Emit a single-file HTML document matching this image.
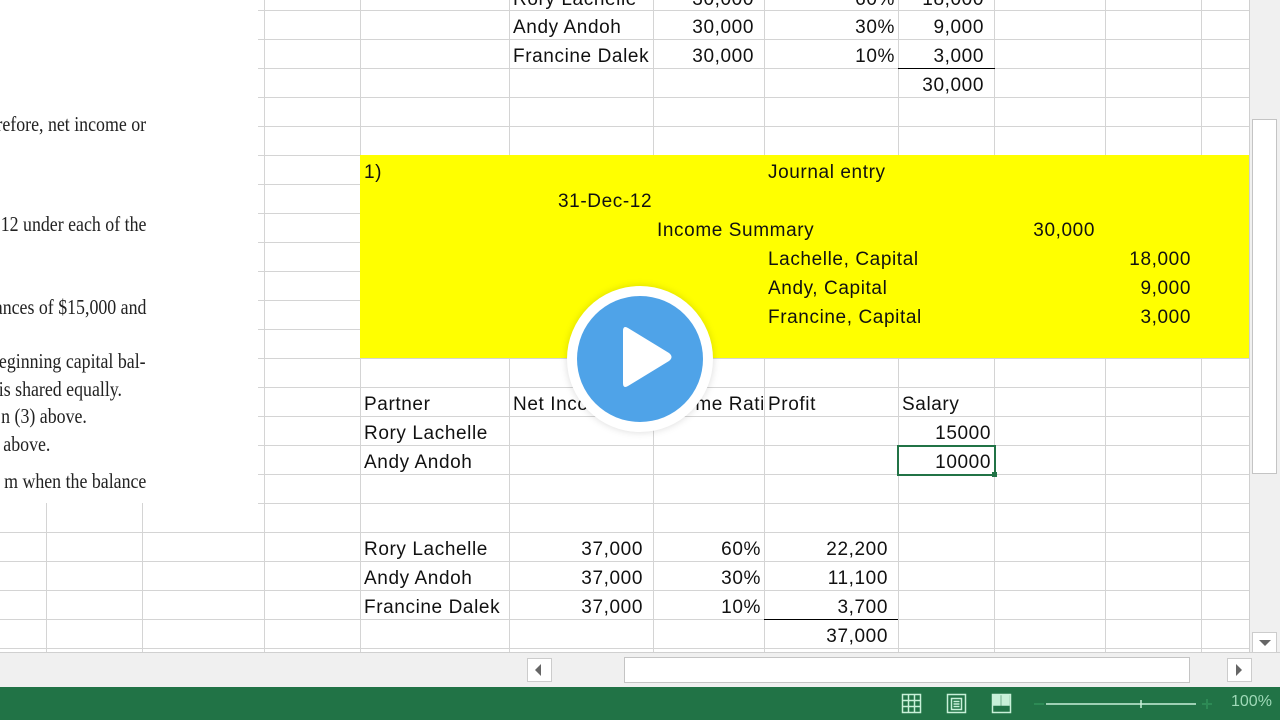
<!DOCTYPE html>
<html><head><style>
*{margin:0;padding:0;box-sizing:border-box}
body{width:1280px;height:720px;overflow:hidden;background:#fff;position:relative;font-family:"Liberation Sans",sans-serif}
.h{position:absolute;height:1px;background:#d4d4d4}
.v{position:absolute;width:1px;background:#d4d4d4}
.t{position:absolute;font-size:19px;color:#111;line-height:29px;white-space:nowrap;padding-top:2px;letter-spacing:0.6px}
.r{text-align:right}
.s{position:absolute;font-family:"Liberation Serif",serif;font-size:21px;color:#222;white-space:nowrap;transform:scaleX(.85);transform-origin:right}
</style></head><body>
<div id="g"></div>
<script>
var g=document.getElementById('g'),h='';
for(var y=10;y<=648;y+=29){var x0=(y>=532)?0:258;h+='<div class="h" style="left:'+x0+'px;top:'+y+'px;width:'+(1249-x0)+'px"></div>';}
[264,360,509,653,764,898,994,1105,1201,1249].forEach(function(x){h+='<div class="v" style="left:'+x+'px;top:0;height:652px"></div>'});
[46,142].forEach(function(x){h+='<div class="v" style="left:'+x+'px;top:503px;height:149px"></div>'});
g.innerHTML=h;
</script>
<div style="position:absolute;left:360px;top:155px;width:889px;height:203px;background:#ffff00"></div>
<div class="s" style="right:1134px;top:112px">refore, net income or</div>
<div class="s" style="right:1134px;top:212px">12 under each of the</div>
<div class="s" style="right:1134px;top:295px">ances of $15,000 and</div>
<div class="s" style="right:1134px;top:349px">eginning capital bal-</div>
<div class="s" style="right:1158px;top:377px">is shared equally.</div>
<div class="s" style="right:1193px;top:404px">n (3) above.</div>
<div class="s" style="right:1230px;top:432px">above.</div>
<div class="s" style="right:1134px;top:469px">m when the balance</div>
<div class="t" style="left:513px;top:-17px">Rory Lachelle</div>
<div class="t r" style="left:653px;width:101px;top:-17px">30,000</div>
<div class="t r" style="left:764px;width:131px;top:-17px">60%</div>
<div class="t r" style="left:898px;width:86px;top:-17px">18,000</div>
<div class="t" style="left:513px;top:11px">Andy Andoh</div>
<div class="t r" style="left:653px;width:101px;top:11px">30,000</div>
<div class="t r" style="left:764px;width:131px;top:11px">30%</div>
<div class="t r" style="left:898px;width:86px;top:11px">9,000</div>
<div class="t" style="left:513px;top:40px">Francine Dalek</div>
<div class="t r" style="left:653px;width:101px;top:40px">30,000</div>
<div class="t r" style="left:764px;width:131px;top:40px">10%</div>
<div class="t r" style="left:898px;width:86px;top:40px">3,000</div>
<div style="position:absolute;left:898px;top:68px;width:97px;height:1px;background:#000"></div>
<div class="t r" style="left:898px;width:86px;top:69px">30,000</div>
<div class="t" style="left:364px;top:156px">1)</div>
<div class="t" style="left:768px;top:156px">Journal entry</div>
<div class="t" style="left:558px;top:185px">31-Dec-12</div>
<div class="t" style="left:657px;top:214px">Income Summary</div>
<div class="t r" style="left:994px;width:101px;top:214px">30,000</div>
<div class="t" style="left:768px;top:243px">Lachelle, Capital</div>
<div class="t r" style="left:1105px;width:86px;top:243px">18,000</div>
<div class="t" style="left:768px;top:272px">Andy, Capital</div>
<div class="t r" style="left:1105px;width:86px;top:272px">9,000</div>
<div class="t" style="left:768px;top:301px">Francine, Capital</div>
<div class="t r" style="left:1105px;width:86px;top:301px">3,000</div>
<div class="t" style="left:364px;top:388px">Partner</div>
<div class="t" style="left:513px;top:388px">Net Income</div>
<div class="t" style="left:657px;top:388px;width:106px;overflow:hidden">Income Ratio</div>
<div class="t" style="left:768px;top:388px">Profit</div>
<div class="t" style="left:902px;top:388px">Salary</div>
<div class="t" style="left:364px;top:417px">Rory Lachelle</div>
<div class="t r" style="left:898px;width:93px;top:417px">15000</div>
<div class="t" style="left:364px;top:446px">Andy Andoh</div>
<div class="t r" style="left:898px;width:93px;top:446px">10000</div>
<div style="position:absolute;left:897px;top:445px;width:99px;height:31px;border:2px solid #217346"></div>
<div style="position:absolute;left:992px;top:472px;width:5px;height:5px;background:#217346"></div>
<div class="t" style="left:364px;top:533px">Rory Lachelle</div>
<div class="t r" style="left:509px;width:134px;top:533px">37,000</div>
<div class="t r" style="left:653px;width:108px;top:533px">60%</div>
<div class="t r" style="left:764px;width:124px;top:533px">22,200</div>
<div class="t" style="left:364px;top:562px">Andy Andoh</div>
<div class="t r" style="left:509px;width:134px;top:562px">37,000</div>
<div class="t r" style="left:653px;width:108px;top:562px">30%</div>
<div class="t r" style="left:764px;width:124px;top:562px">11,100</div>
<div class="t" style="left:364px;top:591px">Francine Dalek</div>
<div class="t r" style="left:509px;width:134px;top:591px">37,000</div>
<div class="t r" style="left:653px;width:108px;top:591px">10%</div>
<div class="t r" style="left:764px;width:124px;top:591px">3,700</div>
<div style="position:absolute;left:764px;top:619px;width:134px;height:1px;background:#000"></div>
<div class="t r" style="left:764px;width:124px;top:620px">37,000</div>
<div style="position:absolute;left:1249px;top:0;width:31px;height:655px;background:#f0f0f0;border-left:1px solid #d0d0d0"></div>
<div style="position:absolute;left:1252px;top:119px;width:25px;height:355px;background:#fff;border:1px solid #c4c4c4"></div>
<div style="position:absolute;left:1252px;top:632px;width:25px;height:22px;background:#fff;border:1px solid #ccc"></div>
<div style="position:absolute;left:1259px;top:640px;border-left:6px solid transparent;border-right:6px solid transparent;border-top:6px solid #666"></div>
<div style="position:absolute;left:0;top:652px;width:1280px;height:35px;background:#f0f0f0;border-top:1px solid #d0d0d0"></div>
<div style="position:absolute;left:527px;top:658px;width:25px;height:24px;background:#fff;border:1px solid #ccc"></div>
<div style="position:absolute;left:535px;top:664px;border-top:6px solid transparent;border-bottom:6px solid transparent;border-right:6px solid #666"></div>
<div style="position:absolute;left:624px;top:657px;width:566px;height:26px;background:#fff;border:1px solid #c4c4c4"></div>
<div style="position:absolute;left:1227px;top:658px;width:25px;height:24px;background:#fff;border:1px solid #ccc"></div>
<div style="position:absolute;left:1236px;top:664px;border-top:6px solid transparent;border-bottom:6px solid transparent;border-left:6px solid #666"></div>
<div style="position:absolute;left:0;top:687px;width:1280px;height:33px;background:#217346"></div>
<svg style="position:absolute;left:900px;top:692px" width="330" height="24" fill="none" stroke="#c8f0d8" stroke-width="1.5">
<rect x="2.5" y="2.5" width="18" height="18"/><path d="M8.5 2.5v18M14.5 2.5v18M2.5 8.5h18M2.5 14.5h18"/>
<rect x="47.5" y="2.5" width="18" height="18"/><rect x="51.5" y="6.5" width="10" height="11"/><path d="M53.5 9.5h6M53.5 12h6M53.5 14.5h6"/>
<rect x="92.5" y="2.5" width="18" height="18"/><rect x="93" y="3" width="7" height="10" fill="#c8f0d8"/><rect x="102" y="3" width="7" height="10" fill="#c8f0d8"/>
<path d="M134 12h10" stroke="#2d8a55" stroke-width="2"/><path d="M146 12h150M241 8v8"/><path d="M302 12h10M307 7v10" stroke="#2d8a55" stroke-width="2"/>
</svg>
<div style="position:absolute;left:1231px;top:693px;font-size:16px;color:#9fd9b8">100%</div>
<div style="position:absolute;left:567px;top:286px;width:146px;height:146px;border-radius:50%;background:#fff;box-shadow:0 0 8px rgba(0,0,0,.15)"></div>
<div style="position:absolute;left:577px;top:296px;width:126px;height:126px;border-radius:50%;background:#4fa3e8"></div>
<svg style="position:absolute;left:617px;top:323px" width="60" height="72"><path d="M6 8Q6 2 11 5L52 30Q57 34 52 38L11 63Q6 66 6 60Z" fill="#fff"/></svg>
</body></html>
